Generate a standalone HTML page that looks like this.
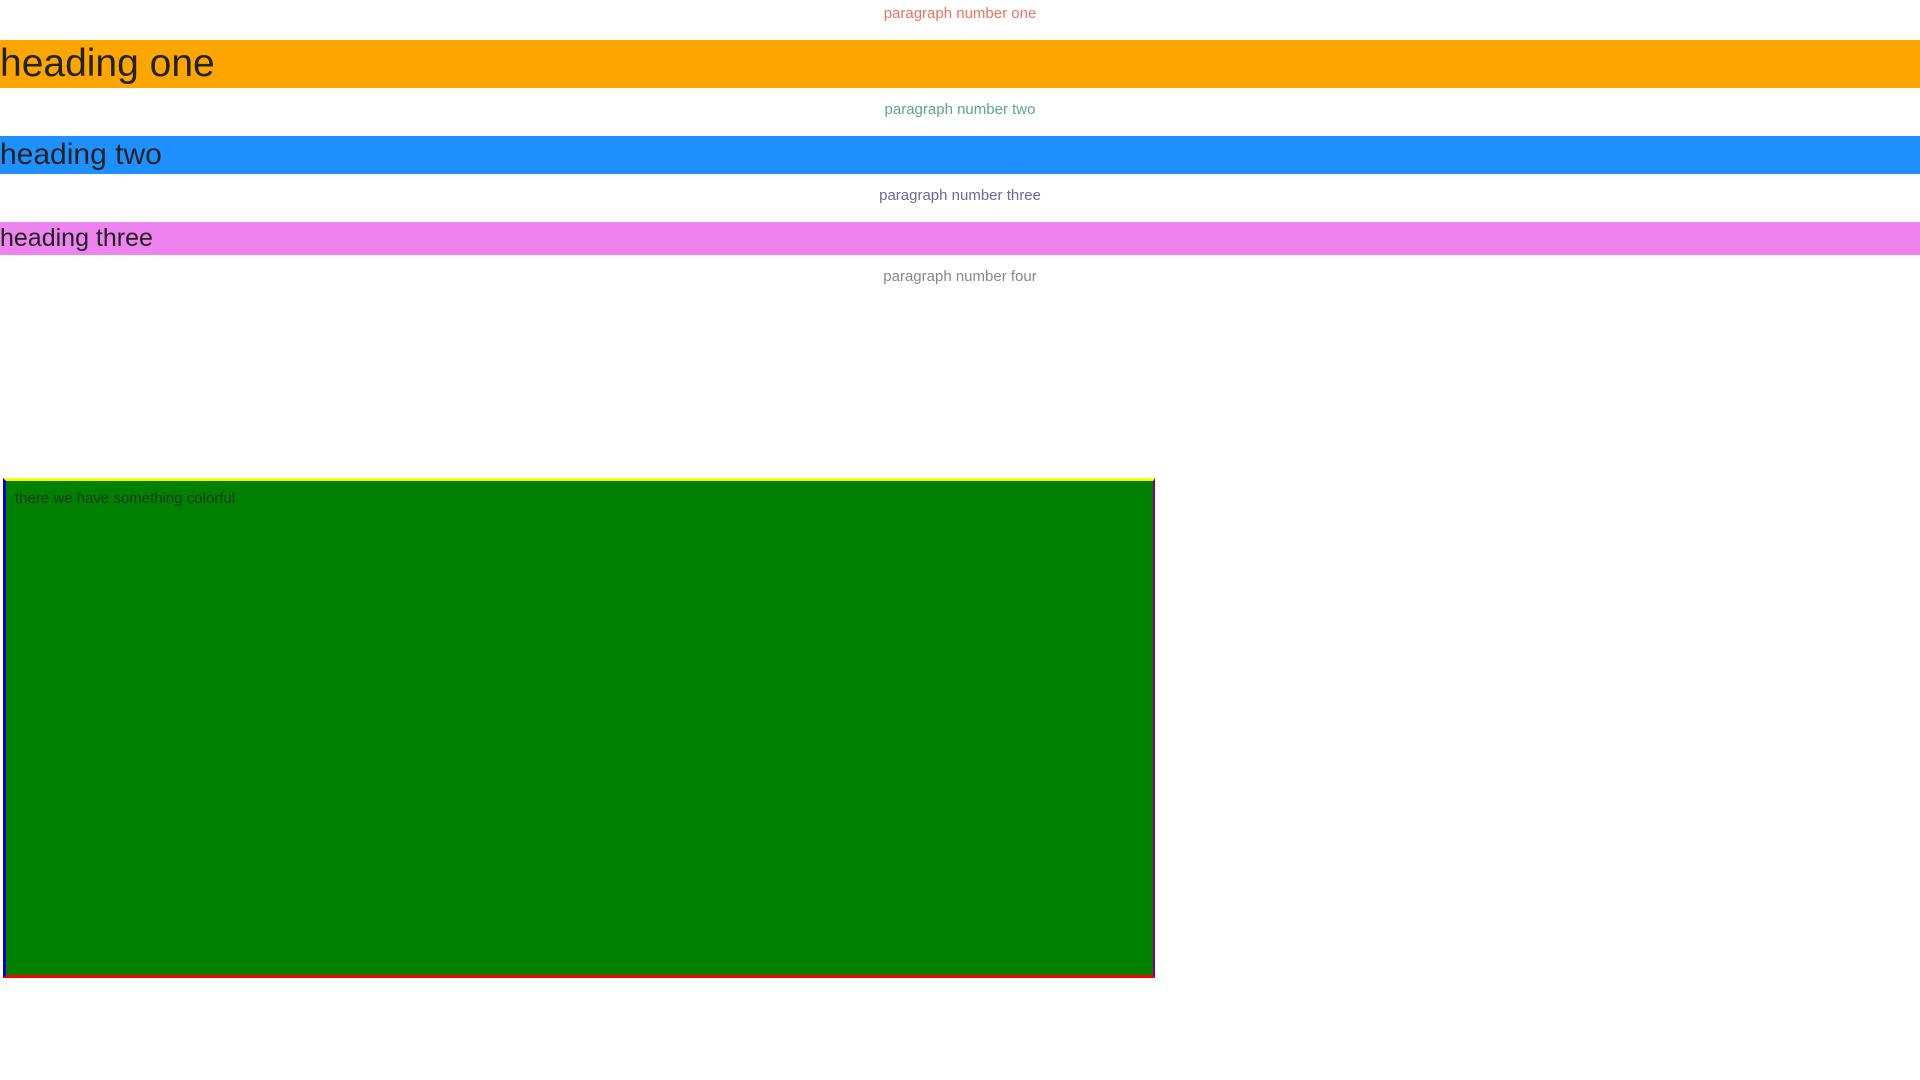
<!DOCTYPE html>
<html><head><style>
body{margin:0;width:1920px;height:1080px;background:#fff;position:relative;font-family:"Liberation Sans",sans-serif;overflow:hidden}
.p{position:absolute;left:0;width:1920px;text-align:center;font-size:15px;line-height:20px}
.h{position:absolute;left:0;width:1920px;color:#222;white-space:nowrap}
</style></head><body>
<div class="p" style="top:4px;color:#e9735f">paragraph number one</div>
<div class="h" style="top:40px;height:48px;background:#ffa500;font-size:39px;line-height:48px">heading one</div>
<div class="p" style="top:100px;color:#5aa58d">paragraph number two</div>
<div class="h" style="top:136px;height:38px;background:#1e90ff;font-size:30px;line-height:38px">heading two</div>
<div class="p" style="top:186px;color:#6a6a9a">paragraph number three</div>
<div class="h" style="top:222px;height:33px;background:#ee82ee;font-size:25px;line-height:33px">heading three</div>
<div class="p" style="top:267px;color:#888">paragraph number four</div>
<div style="position:absolute;left:3px;top:478px;width:1147px;height:494px;background:#008000;border-top:3px solid #ffff00;border-left:3px solid #0000cc;border-right:2px solid #800080;border-bottom:3px solid #ff0000;">
<div style="position:absolute;left:9px;top:9px;font-size:15px;color:#1a3a1a">there we have something colorful</div>
</div>
</body></html>
